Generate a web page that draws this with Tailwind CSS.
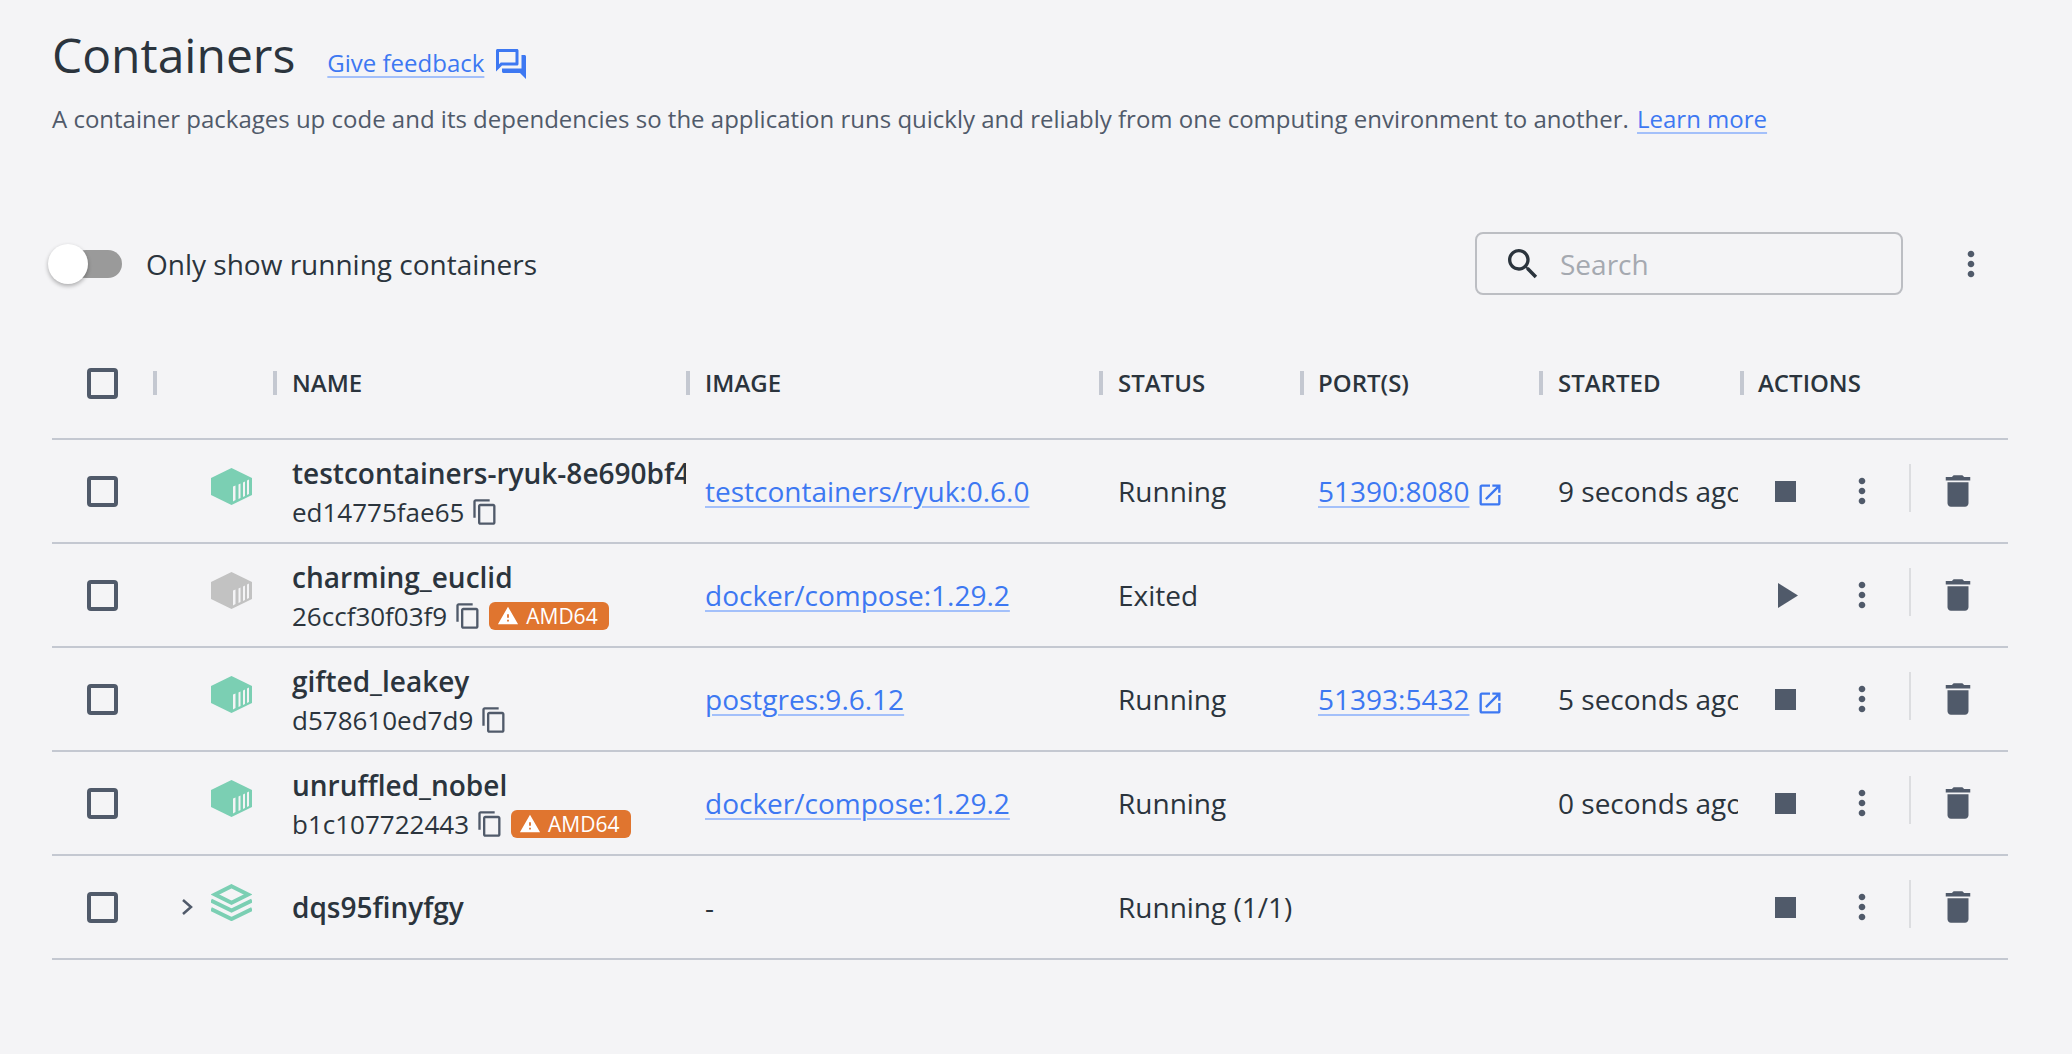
<!DOCTYPE html>
<html lang="en">

<head>
    <meta charset="UTF-8">
    <meta name="viewport" content="width=device-width, initial-scale=1.0">
    <script src="https://cdn.jsdelivr.net/npm/@tailwindcss/browser@4"></script>
    <title>Containers</title>
</head>

<body class="bg-[#f4f4f6] font-['Open_Sans',sans-serif] text-[#2b343d] text-[28px] overflow-hidden">
    <div class="w-[2072px] h-[1054px] pl-[52px] pr-[64px] pt-[18px]">
        <!-- page title -->
        <div class="flex items-center h-[74px]">
            <h1 class="text-[48px] leading-[74px]">Containers</h1>
            <a href="#" class="ml-[32px] mt-[16px] text-[24px] text-[#3d78f2] underline decoration-[#a3c0fa] decoration-2 underline-offset-4">Give feedback</a>
            <svg class="ml-[9px] mt-[18px] w-[36px] h-[36px] text-[#3d78f2]" viewBox="0 0 24 24" fill="currentColor"><path d="M15 4v7H5.17l-.59.59-.58.58V4h11m1-2H3c-.55 0-1 .45-1 1v14l4-4h10c.55 0 1-.45 1-1V3c0-.55-.45-1-1-1zm5 4h-2v9H6v2c0 .55.45 1 1 1h11l4 4V7c0-.55-.45-1-1-1z"/></svg>
        </div>
        <p class="mt-[8px] text-[24px] leading-[38px] text-[#505a6a]">A container packages up code and its dependencies so the application runs quickly and reliably from one computing environment to another. <a href="#" class="ml-[2px] text-[#3d78f2] underline decoration-[#a3c0fa] decoration-2 underline-offset-4">Learn more</a></p>

        <!-- toolbar -->
        <div class="flex items-center h-[63px] mt-[94px]">
            <div class="relative w-[70px] h-[28px] ml-[-4px] flex items-center">
                <div class="absolute left-[24px] w-[50px] h-[28px] rounded-full bg-[#9a9a9a]"></div>
                <div class="absolute left-0 w-[40px] h-[40px] rounded-full bg-white shadow-[0_2px_4px_rgba(0,0,0,0.3)]"></div>
            </div>
            <span class="ml-[28px]">Only show running containers</span>
            <div class="ml-auto flex items-center w-[428px] h-[63px] border-2 border-[#bcbec3] rounded-[8px] pl-[26px]">
                <svg class="w-[40px] h-[40px] text-[#2b343d]" viewBox="0 0 24 24" fill="currentColor"><path d="M15.5 14h-.79l-.28-.27C15.41 12.59 16 11.11 16 9.5 16 5.91 13.09 3 9.5 3S3 5.91 3 9.5 5.91 16 9.5 16c1.61 0 3.09-.59 4.23-1.57l.27.28v.79l5 4.99L20.49 19l-4.99-5zm-6 0C7.01 14 5 11.99 5 9.5S7.01 5 9.5 5 14 7.01 14 9.5 11.99 14 9.5 14z"/></svg>
                <span class="ml-[17px] text-[#a5a9b0]">Search</span>
            </div>
            <svg class="ml-[48px] mr-[17px] w-[40px] h-[40px] text-[#505a6a]" viewBox="0 0 24 24" fill="currentColor"><path d="M12 8c1.1 0 2-.9 2-2s-.9-2-2-2-2 .9-2 2 .9 2 2 2zm0 2c-1.1 0-2 .9-2 2s.9 2 2 2 2-.9 2-2-.9-2-2-2zm0 6c-1.1 0-2 .9-2 2s.9 2 2 2 2-.9 2-2-.9-2-2-2z"/></svg>
        </div>

        <!-- table -->
        <div class="mt-[33px]">
            <div class="grid grid-cols-[101px_120px_413px_413px_201px_239px_201px_268px] items-center h-[112px] border-b-2 border-[#c4c8d1] text-[24px] font-semibold">
                <div class="pl-[35px]"><div class="w-[31px] h-[31px] border-[4px] border-[#505a6a] rounded-[4px]"></div></div>
                <div class="flex"><span class="w-1 h-6 bg-[#c4c8d1]"></span></div>
                <div class="flex items-center gap-[15px]"><span class="w-1 h-6 bg-[#c4c8d1]"></span>NAME</div>
                <div class="flex items-center gap-[15px]"><span class="w-1 h-6 bg-[#c4c8d1]"></span>IMAGE</div>
                <div class="flex items-center gap-[15px]"><span class="w-1 h-6 bg-[#c4c8d1]"></span>STATUS</div>
                <div class="flex items-center gap-[14px]"><span class="w-1 h-6 bg-[#c4c8d1]"></span>PORT(S)</div>
                <div class="flex items-center gap-[15px]"><span class="w-1 h-6 bg-[#c4c8d1]"></span>STARTED</div>
                <div class="flex items-center gap-[14px]"><span class="w-1 h-6 bg-[#c4c8d1]"></span>ACTIONS</div>
            </div>

            <!-- testcontainers-ryuk -->
            <div class="grid grid-cols-[101px_120px_413px_413px_201px_239px_201px_268px] items-center h-[104px] border-b-2 border-[#c4c8d1]">
                <div class="pl-[35px]"><div class="w-[31px] h-[31px] border-[4px] border-[#505a6a] rounded-[4px]"></div></div>
                <div class="pl-[58px] mb-[10px]">
                    <svg class="w-[41px] h-[37px]" viewBox="0 0 41 37"><polygon fill="#7bcfb3" points="20.5,0 41,10 41,27 20.5,37 0,27 0,10"/><polygon fill="#f4f4f6" points="22,18.5 24.5,17.5 24.5,32 22,33.5"/><polygon fill="#f4f4f6" points="27.5,16.5 29.5,15.5 29.5,30 27.5,31"/><polygon fill="#f4f4f6" points="32,14.5 34,13.5 34,28 32,29"/><polygon fill="#f4f4f6" points="36,12.5 38,11.5 38,26 36,27"/></svg>
                </div>
                <div class="pl-[19px] overflow-hidden whitespace-nowrap">
                    <div class="font-semibold leading-[38px] mt-[4px]">testcontainers-ryuk-8e690bf4</div>
                    <div class="flex items-center text-[26px] leading-[40px]">ed14775fae65
                        <svg class="ml-[7px] w-[28px] h-[28px] text-[#505a6a]" viewBox="0 0 24 24" fill="currentColor"><path d="M16 1H4c-1.1 0-2 .9-2 2v14h2V3h12V1zm3 4H8c-1.1 0-2 .9-2 2v14c0 1.1.9 2 2 2h11c1.1 0 2-.9 2-2V7c0-1.1-.9-2-2-2zm0 16H8V7h11v14z"/></svg>
                    </div>
                </div>
                <div class="pl-[19px]"><a href="#" class="text-[#3d78f2] underline decoration-[#a3c0fa] decoration-2 underline-offset-4">testcontainers/ryuk:0.6.0</a></div>
                <div class="pl-[19px]">Running</div>
                <div class="pl-[18px] flex items-center"><a href="#" class="text-[#3d78f2] underline decoration-[#a3c0fa] decoration-2 underline-offset-4">51390:8080</a>
                    <svg class="ml-[7px] mt-[8px] w-[28px] h-[28px] text-[#3d78f2]" viewBox="0 0 24 24" fill="currentColor"><path d="M19 19H5V5h7V3H5c-1.11 0-2 .9-2 2v14c0 1.1.89 2 2 2h14c1.1 0 2-.9 2-2v-7h-2v7zM14 3v2h3.59l-9.83 9.83 1.41 1.41L19 6.41V10h2V3h-7z"/></svg>
                </div>
                <div class="pl-[19px] mr-[2px] overflow-hidden whitespace-nowrap">9 seconds ago</div>
                <div class="flex items-center">
                    <div class="w-[102px] pl-[35px]"><div class="w-[21px] h-[21px] bg-[#505a6a]"></div></div>
                    <svg class="w-[40px] h-[40px] text-[#505a6a]" viewBox="0 0 24 24" fill="currentColor"><path d="M12 8c1.1 0 2-.9 2-2s-.9-2-2-2-2 .9-2 2 .9 2 2 2zm0 2c-1.1 0-2 .9-2 2s.9 2 2 2 2-.9 2-2-.9-2-2-2zm0 6c-1.1 0-2 .9-2 2s.9 2 2 2 2-.9 2-2-.9-2-2-2z"/></svg>
                    <div class="ml-[27px] w-[2px] h-[48px] bg-[#dcdde0] mt-[-6px]"></div>
                    <svg class="ml-[26px] w-[42px] h-[42px] text-[#505a6a]" viewBox="0 0 24 24" fill="currentColor"><path d="M6 19c0 1.1.9 2 2 2h8c1.1 0 2-.9 2-2V7H6v12zM19 4h-3.5l-1-1h-5l-1 1H5v2h14V4z"/></svg>
                </div>
            </div>

            <!-- charming_euclid -->
            <div class="grid grid-cols-[101px_120px_413px_413px_201px_239px_201px_268px] items-center h-[104px] border-b-2 border-[#c4c8d1]">
                <div class="pl-[35px]"><div class="w-[31px] h-[31px] border-[4px] border-[#505a6a] rounded-[4px]"></div></div>
                <div class="pl-[58px] mb-[10px]">
                    <svg class="w-[41px] h-[37px]" viewBox="0 0 41 37"><polygon fill="#c2c2c2" points="20.5,0 41,10 41,27 20.5,37 0,27 0,10"/><polygon fill="#f4f4f6" points="22,18.5 24.5,17.5 24.5,32 22,33.5"/><polygon fill="#f4f4f6" points="27.5,16.5 29.5,15.5 29.5,30 27.5,31"/><polygon fill="#f4f4f6" points="32,14.5 34,13.5 34,28 32,29"/><polygon fill="#f4f4f6" points="36,12.5 38,11.5 38,26 36,27"/></svg>
                </div>
                <div class="pl-[19px] overflow-hidden whitespace-nowrap">
                    <div class="font-semibold leading-[38px] mt-[4px]">charming_euclid</div>
                    <div class="flex items-center text-[26px] leading-[40px]">26ccf30f03f9
                        <svg class="ml-[7px] w-[28px] h-[28px] text-[#505a6a]" viewBox="0 0 24 24" fill="currentColor"><path d="M16 1H4c-1.1 0-2 .9-2 2v14h2V3h12V1zm3 4H8c-1.1 0-2 .9-2 2v14c0 1.1.9 2 2 2h11c1.1 0 2-.9 2-2V7c0-1.1-.9-2-2-2zm0 16H8V7h11v14z"/></svg>
                        <span class="ml-[7px] flex items-center h-[28px] w-[120px] pl-[8px] rounded-[6px] bg-[#e0752f] text-white text-[21px] font-medium">
                            <svg class="w-[22px] h-[22px] mr-[7px]" viewBox="0 0 24 24" fill="currentColor"><path d="M1 21h22L12 2 1 21zm12-3h-2v-2h2v2zm0-4h-2v-4h2v4z"/></svg>AMD64</span>
                    </div>
                </div>
                <div class="pl-[19px]"><a href="#" class="text-[#3d78f2] underline decoration-[#a3c0fa] decoration-2 underline-offset-4">docker/compose:1.29.2</a></div>
                <div class="pl-[19px]">Exited</div>
                <div></div>
                <div></div>
                <div class="flex items-center">
                    <div class="w-[102px] pl-[38px]"><svg class="w-[20px] h-[25px]" viewBox="0 0 20 25" fill="#505a6a"><polygon points="0,0 20,12.5 0,25"/></svg></div>
                    <svg class="w-[40px] h-[40px] text-[#505a6a]" viewBox="0 0 24 24" fill="currentColor"><path d="M12 8c1.1 0 2-.9 2-2s-.9-2-2-2-2 .9-2 2 .9 2 2 2zm0 2c-1.1 0-2 .9-2 2s.9 2 2 2 2-.9 2-2-.9-2-2-2zm0 6c-1.1 0-2 .9-2 2s.9 2 2 2 2-.9 2-2-.9-2-2-2z"/></svg>
                    <div class="ml-[27px] w-[2px] h-[48px] bg-[#dcdde0] mt-[-6px]"></div>
                    <svg class="ml-[26px] w-[42px] h-[42px] text-[#505a6a]" viewBox="0 0 24 24" fill="currentColor"><path d="M6 19c0 1.1.9 2 2 2h8c1.1 0 2-.9 2-2V7H6v12zM19 4h-3.5l-1-1h-5l-1 1H5v2h14V4z"/></svg>
                </div>
            </div>

            <!-- gifted_leakey -->
            <div class="grid grid-cols-[101px_120px_413px_413px_201px_239px_201px_268px] items-center h-[104px] border-b-2 border-[#c4c8d1]">
                <div class="pl-[35px]"><div class="w-[31px] h-[31px] border-[4px] border-[#505a6a] rounded-[4px]"></div></div>
                <div class="pl-[58px] mb-[10px]">
                    <svg class="w-[41px] h-[37px]" viewBox="0 0 41 37"><polygon fill="#7bcfb3" points="20.5,0 41,10 41,27 20.5,37 0,27 0,10"/><polygon fill="#f4f4f6" points="22,18.5 24.5,17.5 24.5,32 22,33.5"/><polygon fill="#f4f4f6" points="27.5,16.5 29.5,15.5 29.5,30 27.5,31"/><polygon fill="#f4f4f6" points="32,14.5 34,13.5 34,28 32,29"/><polygon fill="#f4f4f6" points="36,12.5 38,11.5 38,26 36,27"/></svg>
                </div>
                <div class="pl-[19px] overflow-hidden whitespace-nowrap">
                    <div class="font-semibold leading-[38px] mt-[4px]">gifted_leakey</div>
                    <div class="flex items-center text-[26px] leading-[40px]">d578610ed7d9
                        <svg class="ml-[7px] w-[28px] h-[28px] text-[#505a6a]" viewBox="0 0 24 24" fill="currentColor"><path d="M16 1H4c-1.1 0-2 .9-2 2v14h2V3h12V1zm3 4H8c-1.1 0-2 .9-2 2v14c0 1.1.9 2 2 2h11c1.1 0 2-.9 2-2V7c0-1.1-.9-2-2-2zm0 16H8V7h11v14z"/></svg>
                    </div>
                </div>
                <div class="pl-[19px]"><a href="#" class="text-[#3d78f2] underline decoration-[#a3c0fa] decoration-2 underline-offset-4">postgres:9.6.12</a></div>
                <div class="pl-[19px]">Running</div>
                <div class="pl-[18px] flex items-center"><a href="#" class="text-[#3d78f2] underline decoration-[#a3c0fa] decoration-2 underline-offset-4">51393:5432</a>
                    <svg class="ml-[7px] mt-[8px] w-[28px] h-[28px] text-[#3d78f2]" viewBox="0 0 24 24" fill="currentColor"><path d="M19 19H5V5h7V3H5c-1.11 0-2 .9-2 2v14c0 1.1.89 2 2 2h14c1.1 0 2-.9 2-2v-7h-2v7zM14 3v2h3.59l-9.83 9.83 1.41 1.41L19 6.41V10h2V3h-7z"/></svg>
                </div>
                <div class="pl-[19px] mr-[2px] overflow-hidden whitespace-nowrap">5 seconds ago</div>
                <div class="flex items-center">
                    <div class="w-[102px] pl-[35px]"><div class="w-[21px] h-[21px] bg-[#505a6a]"></div></div>
                    <svg class="w-[40px] h-[40px] text-[#505a6a]" viewBox="0 0 24 24" fill="currentColor"><path d="M12 8c1.1 0 2-.9 2-2s-.9-2-2-2-2 .9-2 2 .9 2 2 2zm0 2c-1.1 0-2 .9-2 2s.9 2 2 2 2-.9 2-2-.9-2-2-2zm0 6c-1.1 0-2 .9-2 2s.9 2 2 2 2-.9 2-2-.9-2-2-2z"/></svg>
                    <div class="ml-[27px] w-[2px] h-[48px] bg-[#dcdde0] mt-[-6px]"></div>
                    <svg class="ml-[26px] w-[42px] h-[42px] text-[#505a6a]" viewBox="0 0 24 24" fill="currentColor"><path d="M6 19c0 1.1.9 2 2 2h8c1.1 0 2-.9 2-2V7H6v12zM19 4h-3.5l-1-1h-5l-1 1H5v2h14V4z"/></svg>
                </div>
            </div>

            <!-- unruffled_nobel -->
            <div class="grid grid-cols-[101px_120px_413px_413px_201px_239px_201px_268px] items-center h-[104px] border-b-2 border-[#c4c8d1]">
                <div class="pl-[35px]"><div class="w-[31px] h-[31px] border-[4px] border-[#505a6a] rounded-[4px]"></div></div>
                <div class="pl-[58px] mb-[10px]">
                    <svg class="w-[41px] h-[37px]" viewBox="0 0 41 37"><polygon fill="#7bcfb3" points="20.5,0 41,10 41,27 20.5,37 0,27 0,10"/><polygon fill="#f4f4f6" points="22,18.5 24.5,17.5 24.5,32 22,33.5"/><polygon fill="#f4f4f6" points="27.5,16.5 29.5,15.5 29.5,30 27.5,31"/><polygon fill="#f4f4f6" points="32,14.5 34,13.5 34,28 32,29"/><polygon fill="#f4f4f6" points="36,12.5 38,11.5 38,26 36,27"/></svg>
                </div>
                <div class="pl-[19px] overflow-hidden whitespace-nowrap">
                    <div class="font-semibold leading-[38px] mt-[4px]">unruffled_nobel</div>
                    <div class="flex items-center text-[26px] leading-[40px]">b1c107722443
                        <svg class="ml-[7px] w-[28px] h-[28px] text-[#505a6a]" viewBox="0 0 24 24" fill="currentColor"><path d="M16 1H4c-1.1 0-2 .9-2 2v14h2V3h12V1zm3 4H8c-1.1 0-2 .9-2 2v14c0 1.1.9 2 2 2h11c1.1 0 2-.9 2-2V7c0-1.1-.9-2-2-2zm0 16H8V7h11v14z"/></svg>
                        <span class="ml-[7px] flex items-center h-[28px] w-[120px] pl-[8px] rounded-[6px] bg-[#e0752f] text-white text-[21px] font-medium">
                            <svg class="w-[22px] h-[22px] mr-[7px]" viewBox="0 0 24 24" fill="currentColor"><path d="M1 21h22L12 2 1 21zm12-3h-2v-2h2v2zm0-4h-2v-4h2v4z"/></svg>AMD64</span>
                    </div>
                </div>
                <div class="pl-[19px]"><a href="#" class="text-[#3d78f2] underline decoration-[#a3c0fa] decoration-2 underline-offset-4">docker/compose:1.29.2</a></div>
                <div class="pl-[19px]">Running</div>
                <div></div>
                <div class="pl-[19px] mr-[2px] overflow-hidden whitespace-nowrap">0 seconds ago</div>
                <div class="flex items-center">
                    <div class="w-[102px] pl-[35px]"><div class="w-[21px] h-[21px] bg-[#505a6a]"></div></div>
                    <svg class="w-[40px] h-[40px] text-[#505a6a]" viewBox="0 0 24 24" fill="currentColor"><path d="M12 8c1.1 0 2-.9 2-2s-.9-2-2-2-2 .9-2 2 .9 2 2 2zm0 2c-1.1 0-2 .9-2 2s.9 2 2 2 2-.9 2-2-.9-2-2-2zm0 6c-1.1 0-2 .9-2 2s.9 2 2 2 2-.9 2-2-.9-2-2-2z"/></svg>
                    <div class="ml-[27px] w-[2px] h-[48px] bg-[#dcdde0] mt-[-6px]"></div>
                    <svg class="ml-[26px] w-[42px] h-[42px] text-[#505a6a]" viewBox="0 0 24 24" fill="currentColor"><path d="M6 19c0 1.1.9 2 2 2h8c1.1 0 2-.9 2-2V7H6v12zM19 4h-3.5l-1-1h-5l-1 1H5v2h14V4z"/></svg>
                </div>
            </div>

            <!-- dqs95finyfgy (compose stack) -->
            <div class="grid grid-cols-[101px_120px_413px_413px_201px_239px_201px_268px] items-center h-[104px] border-b-2 border-[#c4c8d1]">
                <div class="pl-[35px]"><div class="w-[31px] h-[31px] border-[4px] border-[#505a6a] rounded-[4px]"></div></div>
                <div class="pl-[28px] flex items-center">
                    <svg class="w-[12px] h-[16px]" viewBox="0 0 12 16" fill="none" stroke="#505a6a" stroke-width="2.5"><polyline points="2,1 10,8 2,15"/></svg>
                    <svg class="ml-[18px] mb-[10px] w-[41px] h-[37px]" viewBox="0 0 41 37" fill="none" stroke="#7bcfb3" stroke-width="4"><polygon points="20.5,2.2 37,10.5 20.5,18.8 4,10.5"/><polyline points="0,16.5 20.5,26.5 41,16.5"/><polyline points="0,25 20.5,35 41,25"/></svg>
                </div>
                <div class="pl-[19px] font-semibold">dqs95finyfgy</div>
                <div class="pl-[19px]">-</div>
                <div class="pl-[19px] whitespace-nowrap">Running (1/1)</div>
                <div></div>
                <div></div>
                <div class="flex items-center">
                    <div class="w-[102px] pl-[35px]"><div class="w-[21px] h-[21px] bg-[#505a6a]"></div></div>
                    <svg class="w-[40px] h-[40px] text-[#505a6a]" viewBox="0 0 24 24" fill="currentColor"><path d="M12 8c1.1 0 2-.9 2-2s-.9-2-2-2-2 .9-2 2 .9 2 2 2zm0 2c-1.1 0-2 .9-2 2s.9 2 2 2 2-.9 2-2-.9-2-2-2zm0 6c-1.1 0-2 .9-2 2s.9 2 2 2 2-.9 2-2-.9-2-2-2z"/></svg>
                    <div class="ml-[27px] w-[2px] h-[48px] bg-[#dcdde0] mt-[-6px]"></div>
                    <svg class="ml-[26px] w-[42px] h-[42px] text-[#505a6a]" viewBox="0 0 24 24" fill="currentColor"><path d="M6 19c0 1.1.9 2 2 2h8c1.1 0 2-.9 2-2V7H6v12zM19 4h-3.5l-1-1h-5l-1 1H5v2h14V4z"/></svg>
                </div>
            </div>
        </div>
    </div>
</body>

</html>
